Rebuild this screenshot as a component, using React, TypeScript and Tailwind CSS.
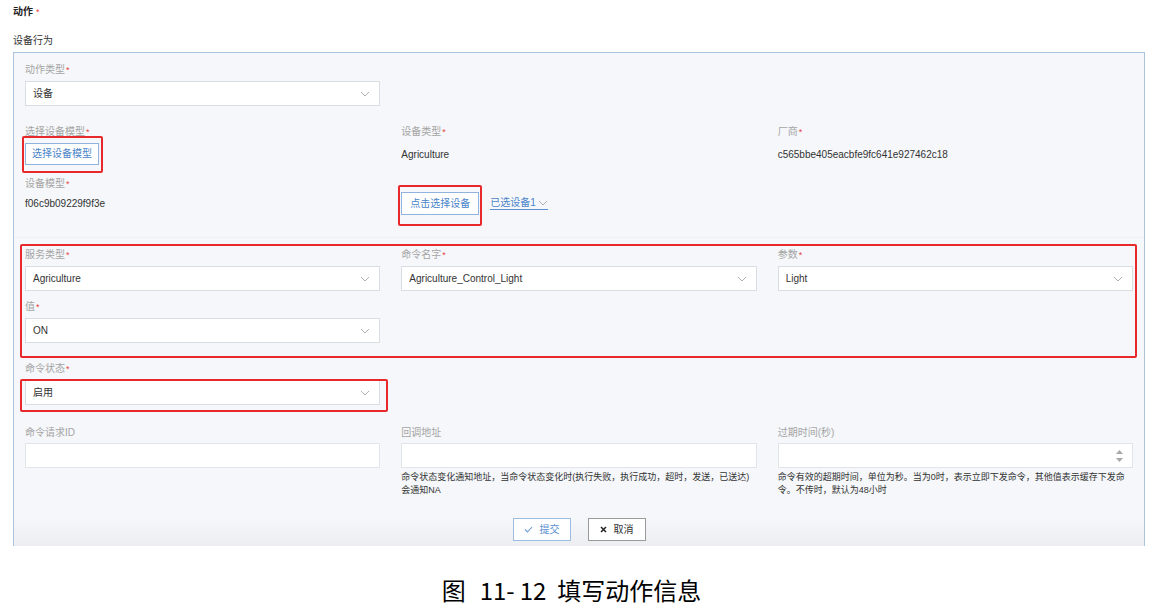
import React from "react";

const font = "font-['Liberation_Sans','Noto_Sans_CJK_SC',sans-serif]";

function Star() {
  return <span className="ml-[1px] text-[#e64340] text-[9px] align-top">*</span>;
}

function Label({ text, required = true }: { text: string; required?: boolean }) {
  return (
    <div className="text-[10px] leading-[14px] text-[#a5a5a5]">
      {text}
      {required && <Star />}
    </div>
  );
}

function Chevron({ className = "" }: { className?: string }) {
  return (
    <svg width="10" height="6" viewBox="0 0 10 6" className={className}>
      <path d="M1 1 L5 5 L9 1" fill="none" stroke="#b0b0b0" strokeWidth="1" />
    </svg>
  );
}

function Select({ value }: { value: string }) {
  return (
    <div className="mt-[4px] h-[25px] bg-white border border-[#d9dde4] flex items-center justify-between pl-[7px] pr-[9px] text-[10px] text-[#333]">
      <span>{value}</span>
      <Chevron />
    </div>
  );
}

function Input({ spinner = false }: { spinner?: boolean }) {
  return (
    <div className="mt-[3px] h-[25px] bg-white border border-[#e1e4ea] flex items-center justify-end pr-[9px]">
      {spinner && (
        <div className="flex flex-col gap-[4px]">
          <svg width="7" height="4" viewBox="0 0 7 4">
            <path d="M0 4 L3.5 0 L7 4 Z" fill="#a8a8a8" />
          </svg>
          <svg width="7" height="4" viewBox="0 0 7 4">
            <path d="M0 0 L3.5 4 L7 0 Z" fill="#a8a8a8" />
          </svg>
        </div>
      )}
    </div>
  );
}

function RedBox({ className }: { className: string }) {
  return <div className={`absolute border-2 border-[#e8292b] rounded-[2px] pointer-events-none ${className}`} />;
}

export default function App() {
  return (
    <div className={`w-[1163px] h-[607px] bg-white overflow-hidden ${font}`}>
      <div className="pl-[13px] pt-[5px]">
        <div className="text-[10px] leading-[14px] font-bold text-[#222]">
          动作
          <span className="ml-[3px] text-[#e64340] font-normal text-[9px]">*</span>
        </div>
        <div className="mt-[15px] text-[10px] leading-[14px] text-[#333]">设备行为</div>

        <div className="mt-[4px] w-[1132px] h-[494px] border-x border-t border-[#a9c5de] bg-gradient-to-b from-[#f5f7fa] via-[#f5f7fa] via-[94%] to-[#eceef2]">
          {/* device section */}
          <div className="px-[11px] pt-[10px] pb-[22px]">
            <div className="grid grid-cols-3 gap-x-[21px]">
              <div>
                <Label text="动作类型" />
                <Select value="设备" />
              </div>
            </div>

            <div className="mt-[19px] grid grid-cols-3 gap-x-[21px]">
              <div>
                <Label text="选择设备模型" />
                <div className="relative mt-[4px] w-[74px]">
                  <button className="block h-[22px] w-[74px] bg-white border border-[#8fb3dc] text-[10px] leading-none text-[#4a84c8]">
                    选择设备模型
                  </button>
                  <RedBox className="-top-[7px] -left-[3px] -right-[4px] -bottom-[8px]" />
                </div>
              </div>
              <div>
                <Label text="设备类型" />
                <div className="mt-[4px] h-[22px] flex items-center text-[10px] text-[#333]">Agriculture</div>
              </div>
              <div>
                <Label text="厂商" />
                <div className="mt-[4px] h-[22px] flex items-center text-[10px] text-[#333]">
                  c565bbe405eacbfe9fc641e927462c18
                </div>
              </div>
            </div>

            <div className="mt-[12px] grid grid-cols-3 gap-x-[21px]">
              <div>
                <Label text="设备模型" />
                <div className="mt-[6px] text-[10px] leading-[14px] text-[#333]">f06c9b09229f9f3e</div>
              </div>
              <div className="pt-[15px] flex items-center gap-[11px]">
                <div className="relative">
                  <button className="block h-[23px] w-[78px] bg-white border border-[#8fb3dc] text-[10px] leading-none text-[#4a84c8]">
                    点击选择设备
                  </button>
                  <RedBox className="-top-[7px] -left-[3px] -right-[3px] -bottom-[11px]" />
                </div>
                <span className="flex items-center gap-[2px] border-b border-[#5b8fd0] text-[10px] leading-[12px] text-[#4a84c8]">
                  已选设备1
                  <Chevron />
                </span>
              </div>
            </div>
          </div>

          {/* command section */}
          <div className="border-t border-[#eef0f3] px-[11px] pt-[10px] pb-[6px]">
            <div className="relative">
              <div className="grid grid-cols-3 gap-x-[21px]">
                <div>
                  <Label text="服务类型" />
                  <Select value="Agriculture" />
                </div>
                <div>
                  <Label text="命令名字" />
                  <Select value="Agriculture_Control_Light" />
                </div>
                <div>
                  <Label text="参数" />
                  <Select value="Light" />
                </div>
              </div>
              <div className="mt-[9px] grid grid-cols-3 gap-x-[21px]">
                <div>
                  <Label text="值" />
                  <Select value="ON" />
                </div>
              </div>
              <RedBox className="-top-[4px] -left-[5px] -right-[4px] -bottom-[15px]" />
            </div>

            <div className="mt-[19px] grid grid-cols-3 gap-x-[21px]">
              <div className="relative">
                <Label text="命令状态" />
                <div className="relative">
                  <Select value="启用" />
                  <RedBox className="-top-[1px] -left-[5px] -right-[8px] -bottom-[7px]" />
                </div>
              </div>
            </div>

            <div className="mt-[21px] grid grid-cols-3 gap-x-[21px]">
              <div>
                <Label text="命令请求ID" required={false} />
                <Input />
              </div>
              <div>
                <Label text="回调地址" required={false} />
                <Input />
                <div className="mt-[3px] text-[9px] leading-[13px] text-[#333] whitespace-nowrap">
                  命令状态变化通知地址，当命令状态变化时(执行失败，执行成功，超时，发送，已送达)
                  <br />
                  会通知NA
                </div>
              </div>
              <div>
                <Label text="过期时间(秒)" required={false} />
                <Input spinner />
                <div className="mt-[3px] text-[9px] leading-[13px] text-[#333] whitespace-nowrap">
                  命令有效的超期时间，单位为秒。当为0时，表示立即下发命令，其他值表示缓存下发命
                  <br />
                  令。不传时，默认为48小时
                </div>
              </div>
            </div>

            <div className="mt-[21px] flex justify-center gap-[17px]">
              <button className="h-[23px] w-[58px] flex items-center justify-center gap-[7px] bg-white border border-[#9dbde3] text-[10px] text-[#5b8fd0]">
                <svg width="9" height="7" viewBox="0 0 9 7">
                  <path d="M1 3.5 L3.5 6 L8 1" fill="none" stroke="#6b9bd6" strokeWidth="1.1" />
                </svg>
                提交
              </button>
              <button className="h-[23px] w-[58px] flex items-center justify-center gap-[7px] bg-white border border-[#9a9a9a] text-[10px] text-[#333]">
                <svg width="7" height="7" viewBox="0 0 7 7">
                  <path d="M1 1 L6 6 M6 1 L1 6" fill="none" stroke="#222" strokeWidth="1.5" />
                </svg>
                取消
              </button>
            </div>
          </div>
        </div>
      </div>

      <div className="h-[61px] pt-[27px] pr-[20px] flex justify-center items-center text-[24px] leading-[34px] text-black font-['Noto_Sans_CJK_SC',sans-serif]">
        <span className="mr-[14px]">图</span>
        <span className="mr-[5px]">11-</span>
        <span className="mr-[11px]">12</span>
        <span>填写动作信息</span>
      </div>
    </div>
  );
}
